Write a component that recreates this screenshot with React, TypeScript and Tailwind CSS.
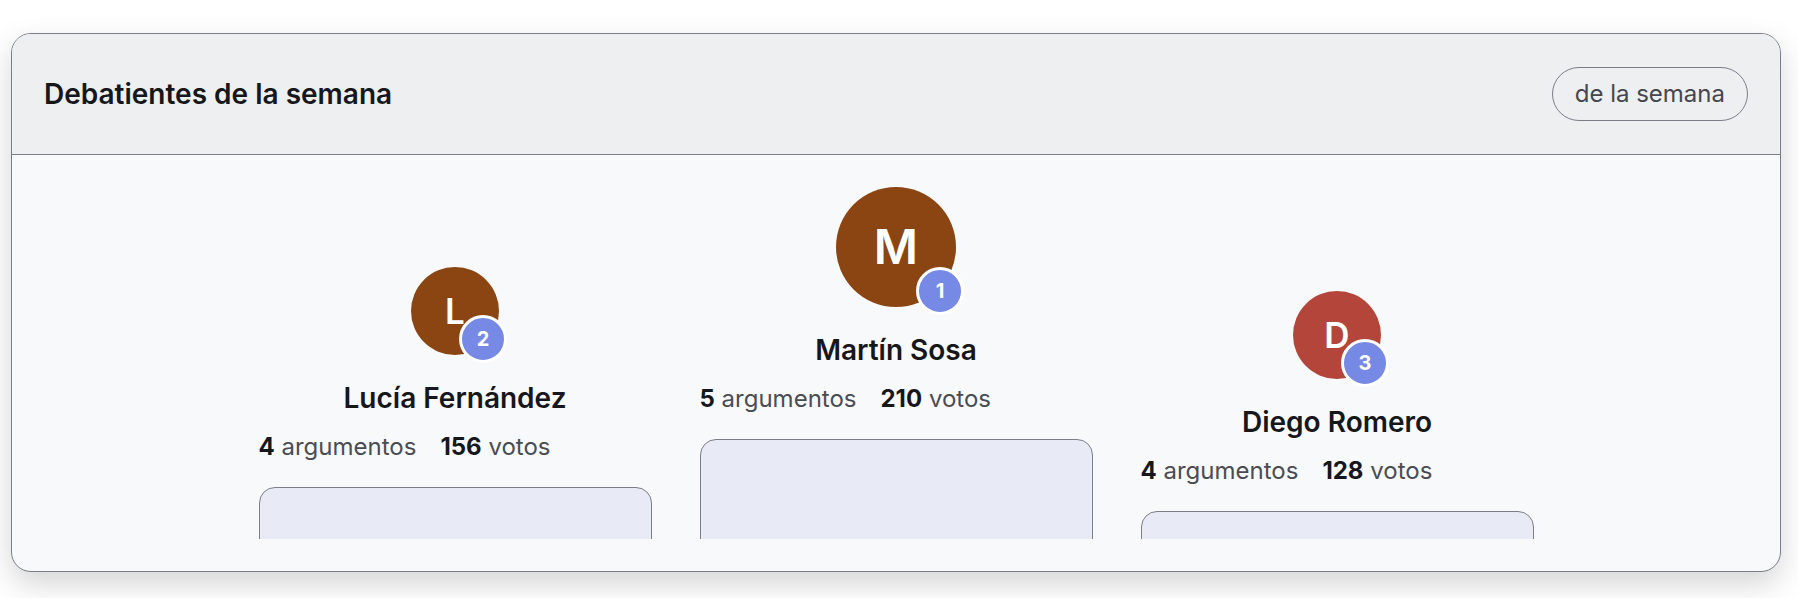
const debaters = [
  { name: "Lucía Fernández", initial: "L", rank: 2, args: 4, votes: 156, color: "bg-[#8b4513]", big: false, box: "h-[152px]" },
  { name: "Martín Sosa", initial: "M", rank: 1, args: 5, votes: 210, color: "bg-[#8b4513]", big: true, box: "h-[200px]" },
  { name: "Diego Romero", initial: "D", rank: 3, args: 4, votes: 128, color: "bg-[#b4453a]", big: false, box: "h-[128px]" },
];

const App = () => {
  return (
    <div className="min-h-screen bg-white pt-[33px] pl-[11px] font-['Inter',sans-serif]">
      <section className="w-[1770px] overflow-hidden rounded-[20px] border border-[#7b7e88] bg-[#f8f9fb] shadow-[0_12px_30px_rgba(0,0,0,0.17)]">
        <header className="flex h-[121px] items-center justify-between border-b border-[#7b7e88] bg-[#eeeff1] px-8">
          <h2 className="text-[28px] font-semibold text-[#16171b]">Debatientes de la semana</h2>
          <span className="rounded-full border border-[#7b7e88] px-[22px] py-[10px] text-[24px] leading-8 text-[#45474e]">
            de la semana
          </span>
        </header>

        <div className="p-8">
          <div className="h-[352px] overflow-hidden">
            <div className="flex items-end justify-center gap-12">
              {debaters.map((d) => (
                <div key={d.rank} className="flex w-[393px] flex-col">
                  <div className="relative self-center">
                    <div
                      className={`${d.color} ${
                        d.big ? "h-[120px] w-[120px] text-[48px]" : "h-[88px] w-[88px] text-[35px]"
                      } flex items-center justify-center rounded-full font-semibold text-white`}
                    >
                      {d.initial}
                    </div>
                    <div className="absolute -bottom-2 -right-2 flex h-[48px] w-[48px] items-center justify-center rounded-full border-[3px] border-white bg-[#7589e5] text-[20px] font-bold text-white">
                      {d.rank}
                    </div>
                  </div>
                  <div className="mt-[25px] text-center text-[28px] font-semibold leading-9 text-[#16171b]">{d.name}</div>
                  <div className="mt-[15px] flex gap-6 text-[24px] leading-8">
                    <span className="text-[#4a4c54]">
                      <b className="font-bold text-[#16171b]">{d.args}</b> argumentos
                    </span>
                    <span className="text-[#4a4c54]">
                      <b className="font-bold text-[#16171b]">{d.votes}</b> votos
                    </span>
                  </div>
                  <div className={`mt-6 w-full ${d.box} rounded-2xl border border-[#7b7e88] bg-[#e8eaf6]`} />
                </div>
              ))}
            </div>
          </div>
        </div>
      </section>
    </div>
  );
};

export default App;
